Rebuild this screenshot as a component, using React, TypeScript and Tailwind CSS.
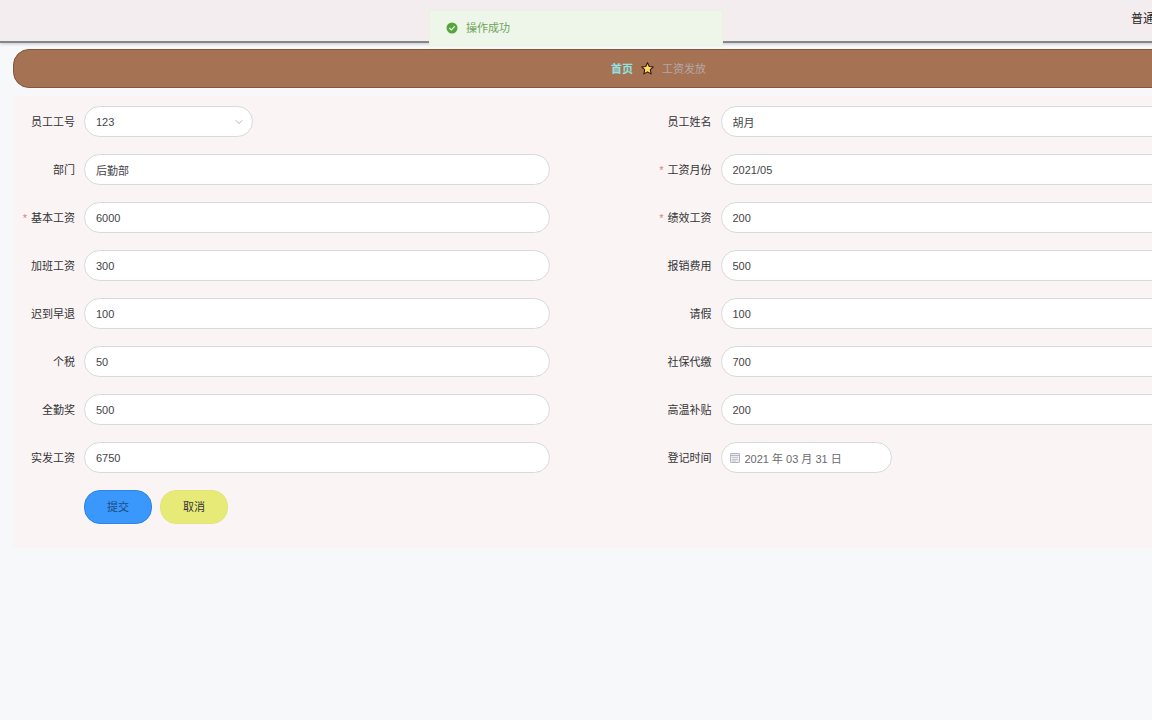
import React from 'react'
import { ChevronDown } from 'lucide-react'

type Field = {
  id: string
  label: string
  value: string
  required?: boolean
  kind?: 'select' | 'date'
}

const fields: Field[] = [
  { id: 'empNo', label: '员工工号', value: '123', kind: 'select' },
  { id: 'empName', label: '员工姓名', value: '胡月' },
  { id: 'dept', label: '部门', value: '后勤部' },
  { id: 'month', label: '工资月份', value: '2021/05', required: true },
  { id: 'base', label: '基本工资', value: '6000', required: true },
  { id: 'merit', label: '绩效工资', value: '200', required: true },
  { id: 'overtime', label: '加班工资', value: '300' },
  { id: 'expense', label: '报销费用', value: '500' },
  { id: 'late', label: '迟到早退', value: '100' },
  { id: 'leave', label: '请假', value: '100' },
  { id: 'tax', label: '个税', value: '50' },
  { id: 'social', label: '社保代缴', value: '700' },
  { id: 'attendance', label: '全勤奖', value: '500' },
  { id: 'heat', label: '高温补贴', value: '200' },
  { id: 'net', label: '实发工资', value: '6750' },
  { id: 'regDate', label: '登记时间', value: '2021 年 03 月 31 日', kind: 'date' },
]

const inputBase =
  'h-[31px] w-full rounded-full border border-[#d9d9dc] bg-white text-[11px] outline-none'

const CalendarIcon = () => (
  <svg viewBox="0 0 12 12" className="w-3 h-3" fill="none" stroke="#b4b6c0">
    <rect x="1.5" y="1.5" width="9" height="9" rx="0.5" fill="#ececf2" />
    <path d="M1.5 3.5h9" />
    <path d="M3 5.5h6M3 7.5h6M3 9h4" strokeWidth="0.7" />
  </svg>
)

const Control: React.FC<{ field: Field }> = ({ field }) => {
  if (field.kind === 'select') {
    return (
      <div className="relative w-[169px]">
        <select id={field.id} defaultValue={field.value} className={`${inputBase} appearance-none px-[11px] text-[#444448]`}>
          <option value={field.value}>{field.value}</option>
        </select>
        <ChevronDown
          className="absolute right-2 top-2 w-3 h-4 text-[#b4b6bc] pointer-events-none"
          strokeWidth={2}
        />
      </div>
    )
  }

  if (field.kind === 'date') {
    return (
      <div className="relative w-[171px]">
        <input id={field.id} type="text" defaultValue={field.value} className={`${inputBase} pl-[23px] pr-3 text-[#6a6a6e]`} />
        <span className="absolute left-2 inset-y-0 flex items-center pointer-events-none">
          <CalendarIcon />
        </span>
      </div>
    )
  }

  return (
    <div className="w-[466px]">
      <input id={field.id} type="text" defaultValue={field.value} className={`${inputBase} px-[11px] text-[#444448]`} />
    </div>
  )
}

const Message = () => (
  <div
    role="status"
    className="fixed top-[10px] left-1/2 -translate-x-1/2 z-10 w-[294px] h-9 pl-4 flex items-center gap-2 bg-[#edf6e9] border border-[#e8f3e2] text-[#6fa35c]"
  >
    <svg viewBox="0 0 12 12" className="w-3 h-3">
      <circle cx="6" cy="6" r="5.5" fill="#57a639" />
      <path d="M3.4 6.1l1.9 1.8 3.4-3.5" fill="none" stroke="#fff" strokeWidth="1.3" />
    </svg>
    <p>操作成功</p>
  </div>
)

const App: React.FC = () => {
  return (
    <div className="min-h-screen overflow-x-hidden bg-[#f6f8fa] font-['Liberation_Sans','Noto_Sans_CJK_SC',sans-serif] text-[11px] leading-4 text-[#333336]">
      <Message />

      <div className="w-full min-w-[1317px]">
        {/* Top bar */}
        <header className="h-[43px] pr-[162px] pb-1 flex items-center justify-end bg-[#f4edf0] border-b-2 border-[#85858a] shadow-[0_1px_3px_rgba(0,0,0,0.2)] text-xs text-[#222]">
          <span>普通</span>
        </header>

        <main className="px-[13px] pt-[6px]">
          <nav className="h-[39px] rounded-2xl border border-[#83573f] bg-[#a57254] flex items-center justify-center gap-2">
            <a href="#home" className="font-bold text-[#8fe3e3]">首页</a>
            <svg viewBox="0 0 14 14" className="w-[13px] h-[13px]">
              <path
                d="M7 .8l1.9 4 4.4.5-3.3 3 .9 4.5L7 10.6l-3.9 2.2.9-4.5-3.3-3 4.4-.5z"
                fill="#ffdc62"
                stroke="#2a1408"
                strokeWidth="1.1"
                strokeLinejoin="round"
              />
            </svg>
            <span className="text-[#b5a8a8]">工资发放</span>
          </nav>

          {/* Salary form */}
          <form className="mt-2 px-[9px] pt-[10px] pb-6 bg-[#faf4f4]" onSubmit={(e) => e.preventDefault()}>
            <div className="grid grid-cols-2 gap-y-[17px]">
              {fields.map((f) => (
                <div key={f.id} className="flex items-center gap-[9px]">
                  <label htmlFor={f.id} className="w-[53px] shrink-0 flex justify-end gap-1 whitespace-nowrap">
                    {f.required && <span className="text-[#d98080]">*</span>}
                    {f.label}
                  </label>
                  <Control field={f} />
                </div>
              ))}
            </div>

            <div className="mt-[17px] pl-[62px] flex gap-2">
              <button type="submit" className="w-[68px] h-[34px] rounded-2xl bg-[#3a98fc] border border-[#2f85e2] text-[#1c4a80]">
                提交
              </button>
              <button type="button" className="w-[68px] h-[34px] rounded-2xl bg-[#e8ea78] border border-[#e3e57a]">
                取消
              </button>
            </div>
          </form>
        </main>
      </div>
    </div>
  )
}

export default App
